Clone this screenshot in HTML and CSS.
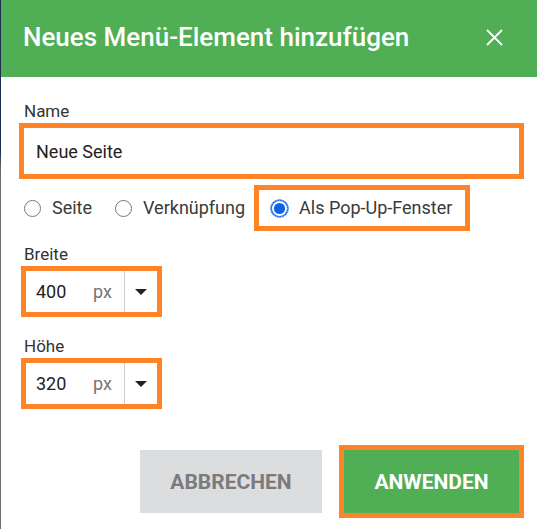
FILE: index.html
```html
<!DOCTYPE html>
<html lang="de">
<head>
<meta charset="utf-8">
<title>Neues Menü-Element hinzufügen</title>
<link rel="stylesheet" href="styles.css">
</head>
<body>
<div class="page">
  <div class="edge"></div>
  <div class="dialog">
    <header class="head">
      <h1 class="title">Neues Menü-Element hinzufügen</h1>
      <svg class="close" width="17" height="17" viewBox="0 0 17 17"><path d="M1 1L16 16M16 1L1 16" stroke="#fff" stroke-width="1.8" fill="none"/></svg>
    </header>
    <main class="body">
      <div class="label name-label">Name</div>
      <div class="hl name-hl">
        <div class="text-input">Neue Seite</div>
      </div>

      <div class="radios">
        <div class="radio first">
          <span class="dot"></span><span class="rlabel">Seite</span>
        </div>
        <div class="radio second">
          <span class="dot"></span><span class="rlabel">Verknüpfung</span>
        </div>
        <div class="hl radio-hl">
          <div class="radio">
            <svg class="dot-on" width="19" height="19" viewBox="0 0 19 19">
              <circle cx="9.5" cy="9.5" r="8.4" fill="#fff" stroke="#1a66e0" stroke-width="1.8"/>
              <circle cx="9.5" cy="9.5" r="8.4" fill="none" stroke="#fff" stroke-width="0.7" stroke-dasharray="1 1.6"/>
              <circle cx="9.5" cy="9.5" r="5.6" fill="#0b63e5"/>
            </svg>
            <span class="rlabel">Als Pop-Up-Fenster</span>
          </div>
        </div>
      </div>

      <div class="label size-label">Breite</div>
      <div class="hl size-hl">
        <div class="size-field">
          <span class="num">400</span>
          <span class="unit">px</span>
          <span class="drop"><span class="tri"></span></span>
        </div>
      </div>

      <div class="label size-label second">Höhe</div>
      <div class="hl size-hl">
        <div class="size-field">
          <span class="num">320</span>
          <span class="unit">px</span>
          <span class="drop"><span class="tri"></span></span>
        </div>
      </div>

      <div class="actions">
        <div class="btn cancel">ABBRECHEN</div>
        <div class="hl btn-hl">
          <div class="btn apply">ANWENDEN</div>
        </div>
      </div>
    </main>
  </div>
</div>
</body>
</html>
```

FILE: styles.css
```css
* { box-sizing: border-box; }
html, body { margin: 0; padding: 0; }
body {
  width: 537px;
  height: 529px;
  overflow: hidden;
  font-family: Roboto, "Liberation Sans", sans-serif;
  background: #fff;
}
.page {
  display: flex;
  width: 537px;
  height: 529px;
}
.edge {
  width: 1px;
  flex: none;
  background: linear-gradient(#1c2d4f 0, #1c2d4f 150px, #6a6a6a 170px, #6a6a6a 100%);
}
.dialog {
  flex: 1;
  display: flex;
  flex-direction: column;
}
.head {
  height: 77px;
  background: #50ae55;
  display: flex;
  align-items: center;
  justify-content: space-between;
  padding: 0 34px 3px 22px;
}
.title {
  margin: 0;
  color: #fff;
  font-size: 26px;
  font-weight: 500;
  line-height: 30px;
}
.close { display: block; }

.body {
  padding: 0 13px 0 18px;
  display: flex;
  flex-direction: column;
  align-items: flex-start;
}
.label {
  color: #333;
  font-size: 17px;
  line-height: 20px;
  padding-left: 5px;
}
.name-label { margin-top: 24px; }
.hl {
  border: 5px solid #ff8428;
}
.name-hl {
  margin-top: 2px;
  width: 505px;
}
.text-input {
  height: 46px;
  display: flex;
  align-items: center;
  padding-left: 12px;
  font-size: 18px;
  color: #222;
}

.radios {
  display: flex;
  align-items: center;
  margin-top: 6px;
  padding-left: 5px;
}
.radio {
  display: flex;
  align-items: center;
  gap: 11px;
}
.radio.first { margin-right: 23px; }
.radio.second { margin-right: 9px; }
.dot {
  width: 17px;
  height: 17px;
  border: 1px solid #767676;
  border-radius: 50%;
  background: #fff;
}
.dot-on { display: block; }
.rlabel {
  font-size: 18px;
  color: #3a3a3a;
  line-height: 20px;
}
.radio-hl {
  height: 46px;
  display: flex;
  align-items: center;
  padding: 0 13px 0 11px;
}
.radio-hl .radio { gap: 10px; }

.size-label { margin-top: 13px; }
.size-label.second { margin-top: 19px; }
.size-hl {
  margin-top: 2px;
  margin-left: 2px;
  width: 141px;
}
.size-field {
  height: 41px;
  display: flex;
  align-items: center;
}
.num {
  font-size: 18px;
  color: #222;
  padding-left: 10px;
  width: 67px;
}
.unit {
  font-size: 18px;
  color: #757575;
  width: 31px;
}
.drop {
  align-self: stretch;
  border-left: 1px solid #cfcfcf;
  flex: 1;
  display: flex;
  align-items: center;
  justify-content: center;
}
.tri {
  width: 0;
  height: 0;
  border-left: 6px solid transparent;
  border-right: 6px solid transparent;
  border-top: 6px solid #222;
}

.actions {
  align-self: stretch;
  display: flex;
  justify-content: flex-end;
  align-items: center;
  gap: 17px;
  margin-top: 36px;
}
.btn {
  height: 63px;
  display: flex;
  align-items: center;
  justify-content: center;
  font-size: 21px;
  font-weight: 700;
}
.cancel {
  width: 182px;
  background: #dcdddf;
  color: #7b7b7b;
}
.apply {
  width: 175px;
  background: #50ae55;
  color: #fff;
}
```
